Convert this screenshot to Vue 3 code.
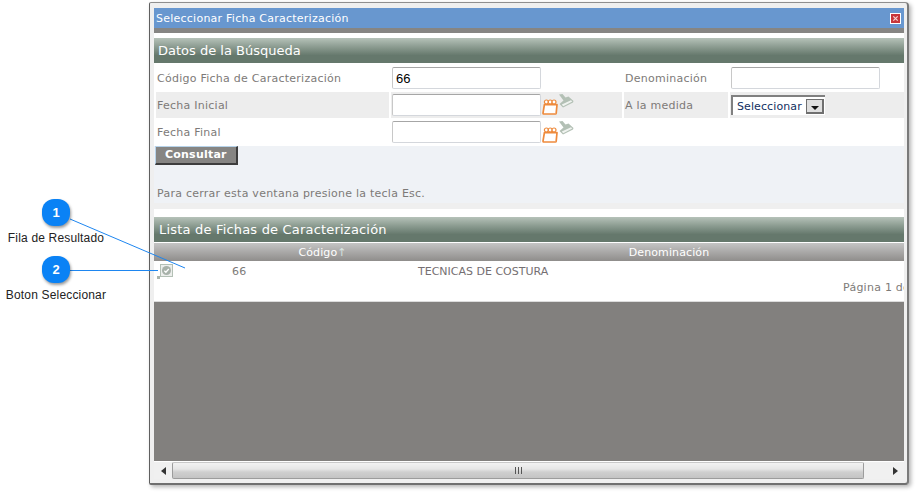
<script setup>
const rows = [
  { label: 'Código Ficha de Caracterización', value: '66', label2: 'Denominación', kind: 'text' },
  { label: 'Fecha Inicial', value: '', label2: 'A la medida', kind: 'select', date: true, alt: true },
  { label: 'Fecha Final', value: '', label2: '', kind: '', date: true }
]
</script>

<template>
  <div class="page">
    <section class="window">
      <div class="viewport">
        <header class="titlebar">
          <span>Seleccionar Ficha Caracterización</span>
          <button class="close" aria-label="Cerrar">
            <svg width="8" height="8" viewBox="0 0 8 8"><path d="M1.5 1.5l5 5M6.5 1.5l-5 5" stroke="#f4d4d4" stroke-width="1.4" /></svg>
          </button>
        </header>
        <div class="titlerule"></div>

        <div class="content">
          <h2 class="band first">Datos de la Búsqueda</h2>
          <div class="form">
            <div v-for="r in rows" :key="r.label" class="row" :class="{ alt: r.alt }">
              <div class="cell lab">{{ r.label }}</div>
              <div class="cell ctl">
                <input class="field" :value="r.value" type="text" />
                <template v-if="r.date">
                  <svg class="cal" width="16" height="16" viewBox="0 0 16 16">
                    <g fill="#fff" stroke="#ee8a3c" stroke-width="1.2">
                      <circle cx="4.4" cy="3" r="2" />
                      <circle cx="8.2" cy="3" r="2" />
                      <circle cx="12" cy="3" r="2" />
                    </g>
                    <path d="M2.4 5.6H15L14.2 14.2Q14.1 15 13.3 15H1.9Q1 15 1 14.1Z" fill="#fff" stroke="#ee8a3c" stroke-width="1.7" stroke-linejoin="round" />
                  </svg>
                  <svg class="brush" width="16" height="14" viewBox="0 0 16 14">
                    <path d="M1 0.5L4.5 0 7.5 3.5 10.5 2.5 15.5 7 15 8.5 5 13.5 1.5 10 5.5 6.5Z" fill="#b3c0b5" />
                    <path d="M3.8 10.4L13 6.2 14.3 7.6 5.2 12.2Z" fill="#f0f3f0" />
                  </svg>
                </template>
              </div>
              <div class="cell lab second" :class="{ blank: !r.label2 }">{{ r.label2 }}</div>
              <div class="cell ctl last">
                <input v-if="r.kind === 'text'" class="field" type="text" />
                <div v-else-if="r.kind === 'select'" class="select">
                  <span>Seleccionar</span>
                  <i class="drop"><b></b></i>
                </div>
              </div>
            </div>
          </div>

          <div class="actions">
            <button class="consult">Consultar</button>
            <p class="hint">Para cerrar esta ventana presione la tecla Esc.</p>
          </div>
          <div class="spacer"></div>

          <div class="list">
            <h2 class="band">Lista de Fichas de Caracterización</h2>
            <div class="thead">
              <span>Código<em>↑</em></span>
              <span>Denominación</span>
            </div>
            <div class="tbody">
              <div class="trow">
                <div class="act">
                  <i class="dot"></i>
                  <span class="pick">
                    <svg width="9" height="9" viewBox="0 0 10 10">
                      <circle cx="5" cy="5" r="5" fill="#a7b1a9" />
                      <path d="M2.6 5.2l1.7 1.7 3.2-3.6" fill="none" stroke="#fff" stroke-width="1.4" />
                    </svg>
                  </span>
                </div>
                <div class="code">66</div>
                <div class="den">TECNICAS DE COSTURA</div>
              </div>
              <div class="pager">Página 1 de 1</div>
            </div>
          </div>
          <div class="empty"></div>
        </div>

        <div class="hscroll">
          <button class="sbtn"><i class="arr left"></i></button>
          <div class="thumb"><span class="grip"></span></div>
          <button class="sbtn end"><i class="arr right"></i></button>
        </div>
      </div>
    </section>

    <svg class="leaders" width="921" height="495" viewBox="0 0 921 495">
      <path d="M70 219L185 268" stroke="#1e86f0" stroke-width="1" fill="none" />
      <path d="M70 270.5H158" stroke="#1e86f0" stroke-width="1" fill="none" />
    </svg>
    <div class="callout c1"><span class="badge">1</span><span class="cap">Fila de Resultado</span></div>
    <div class="callout c2"><span class="badge">2</span><span class="cap">Boton Seleccionar</span></div>
  </div>
</template>

<style scoped>
.page {
  position: relative;
  width: 921px;
  height: 495px;
  padding: 2px 0 0 149px;
  box-sizing: border-box;
  background: #fff;
  overflow: hidden;
  font-family: "DejaVu Sans", Verdana, sans-serif;
  font-size: 11px;
  color: #7d7a78;
}
.window {
  width: 760px;
  height: 483px;
  box-sizing: border-box;
  padding: 5px 4px 6px 4px;
  background: #efefef;
  border: 1px solid #777;
  border-width: 1px 2px 2px 1px;
  border-color: #8f8f8f #7a7a7a #6f6f6f #5f5f5f;
  border-radius: 2px 4px 4px 2px;
  box-shadow: 2px 2px 4px rgba(0, 0, 0, 0.3);
}
.viewport {
  width: 750px;
  height: 471px;
  display: flex;
  flex-direction: column;
  overflow: hidden;
}
.titlebar {
  flex: none;
  height: 20px;
  display: flex;
  align-items: center;
  justify-content: space-between;
  padding: 0 3px 0 2px;
  background: #6897cf;
  color: #fff;
  font-size: 11px;
  letter-spacing: 0.24px;
}
.close {
  width: 11px;
  height: 11px;
  padding: 0;
  box-sizing: border-box;
  display: flex;
  align-items: center;
  justify-content: center;
  background: #c8363a;
  border: 1px solid #fff;
}
.close svg { display: block; width: 7px; height: 7px; }
.titlerule {
  flex: none;
  height: 5px;
  background: #868583;
}
.content {
  flex: 1;
  min-height: 0;
  display: flex;
  flex-direction: column;
  background: #fff;
  padding-top: 5px;
}
.band {
  flex: none;
  margin: 0;
  height: 25px;
  padding-left: 4px;
  display: flex;
  align-items: center;
  color: #fff;
  font-size: 13px;
  font-weight: normal;
  letter-spacing: 0.19px;
  background: linear-gradient(#b6c2b9 0, #8c9c91 35%, #65786c 70%, #65786c 100%);
}
.band.first { letter-spacing: 0; }
.form { flex: none; padding-top: 1px; }
.row {
  display: grid;
  grid-template-columns: 233px 231px 104px 174px;
  column-gap: 2px;
  padding-left: 2px;
  height: 28px;
}
.row.alt { height: 26px; }
.cell {
  display: flex;
  align-items: center;
  min-width: 0;
}
.lab { padding-left: 1px; white-space: nowrap; letter-spacing: 0.25px; }
.second { padding-left: 1px; }
.alt .cell { background: #ededed; }
.ctl { padding-left: 1px; }
.field {
  width: 149px;
  height: 22px;
  box-sizing: border-box;
  padding: 0 3px;
  margin: 0;
  border: 1px solid #d4d7dc;
  border-top-color: #a6a6a6;
  border-left-color: #c8c8c8;
  border-radius: 2px;
  background: #fff;
  font-family: "Liberation Sans", Arial, sans-serif;
  font-size: 13px;
  color: #000;
  outline: none;
}
.cal { margin: 0 0 3px 1px; align-self: flex-end; flex: none; }
.brush { margin-top: 3px; align-self: flex-start; flex: none; }
.alt .brush { margin-top: 2px; }
.select {
  width: 94px;
  height: 20px;
  box-sizing: border-box;
  display: flex;
  align-items: center;
  justify-content: space-between;
  padding-left: 4px;
  padding-right: 1px;
  background: #fff;
  border-top: 2px solid #808080;
  border-left: 2px solid #808080;
  color: #12305f;
  font-size: 11px;
  letter-spacing: 0.1px;
}
.drop {
  width: 18px;
  height: 15px;
  box-sizing: border-box;
  display: flex;
  align-items: center;
  justify-content: center;
  background: #dfdfdf;
  border: 1px solid #6f6f6f;
  border-width: 1px 2px 2px 1px;
}
.drop b {
  display: block;
  margin-top: 4px;
  border: 4px solid transparent;
  border-top: 4px solid #111;
  border-bottom: 0;
}
.actions {
  flex: none;
  height: 57px;
  background: #eff2f6;
  position: relative;
  display: flex;
  flex-direction: column;
  align-items: flex-start;
}
.consult {
  width: 83px;
  height: 19px;
  margin: 0 0 0 1px;
  padding: 0 0 1px 9px;
  text-align: left;
  box-sizing: border-box;
  background: #868583;
  color: #fff;
  border: 0 solid #3d3d3d;
  border-width: 1px 2px 2px 1px;
  border-top-color: #b7d3ea;
  border-left-color: #b7d3ea;
  font-family: "DejaVu Sans", Verdana, sans-serif;
  font-size: 11px;
  font-weight: bold;
  letter-spacing: 0.22px;
}
.hint {
  margin: 22px 0 0 3px;
  letter-spacing: 0.25px;
  line-height: 14px;
}
.spacer {
  flex: none;
  height: 6px;
  background: #efefef;
}
.list {
  flex: none;
  width: 800px;
  padding-top: 8px;
  background: #fff;
}
.list .band { padding-left: 5px; }
.thead {
  margin-top: 1px;
  height: 18px;
  display: grid;
  grid-template-columns: 337px 356px;
  align-items: center;
  justify-items: center;
  color: #fff;
  letter-spacing: 0.1px;
  background: linear-gradient(#c4c4c4, #8f8d8b);
}
.thead em { font-style: normal; color: #d8e4e0; }
.tbody {
  height: 41px;
  border-bottom: 1px solid #dcdcdc;
  box-sizing: border-box;
  background: #fff;
}
.trow {
  height: 21px;
  display: grid;
  grid-template-columns: 78px 186px 1fr;
  align-items: center;
}
.act {
  position: relative;
  height: 21px;
  padding: 3px 0 0 6px;
  box-sizing: border-box;
}
.dot {
  position: absolute;
  left: 3px;
  top: 15px;
  width: 3px;
  height: 3px;
  background: #aab4ac;
}
.pick {
  width: 13px;
  height: 13px;
  box-sizing: border-box;
  border: 1px solid #b3c0b5;
  background: #eceeec;
  display: flex;
  align-items: center;
  justify-content: center;
}
.pick svg { display: block; }
.code { letter-spacing: 0.3px; }
.den { white-space: nowrap; color: #756f72; font-size: 11px; }
.pager {
  width: 800px;
  padding-left: 689px;
  box-sizing: border-box;
  white-space: nowrap;
  line-height: 12px;
  letter-spacing: 0.25px;
}
.empty {
  flex: 1;
  background: #82807e;
  min-height: 0;
}
.hscroll {
  flex: none;
  height: 17px;
  display: flex;
  background: #f0f0f0;
  border-top: 1px solid #fff;
}
.sbtn {
  flex: none;
  width: 18px;
  padding: 0;
  border: 0;
  background: transparent;
  display: flex;
  align-items: center;
  justify-content: center;
}
.sbtn.end { width: 40px; padding-left: 22px; box-sizing: border-box; }
.thumb {
  flex: 1;
  display: flex;
  align-items: center;
  justify-content: center;
  box-sizing: border-box;
  border: 1px solid #9c9c9c;
  border-top-color: #c8c8c8;
  border-radius: 2px;
  background: linear-gradient(#f2f2f2 0, #e6e6e6 40%, #cfcfcf 60%, #c4c4c4 100%);
}
.grip {
  width: 7px;
  height: 7px;
  background: repeating-linear-gradient(90deg, #555 0 1px, transparent 1px 3px);
}
.arr {
  display: block;
  width: 0;
  height: 0;
  border: 4px solid transparent;
}
.arr.left { border-right: 5px solid #333; border-left: 0; }
.arr.right { border-left: 5px solid #333; border-right: 0; }
.leaders {
  position: absolute;
  left: 0;
  top: 0;
  pointer-events: none;
}
.callout {
  position: absolute;
  display: flex;
  flex-direction: column;
  align-items: center;
  font-family: "Liberation Sans", Arial, sans-serif;
}
.c1 { left: 0; top: 199px; width: 112px; row-gap: 5px; }
.c2 { left: 0; top: 256px; width: 112px; row-gap: 5px; }
.badge {
  width: 28px;
  height: 27px;
  border-radius: 12px;
  background: #0a82f5;
  color: #fff;
  font-weight: bold;
  font-size: 13px;
  display: flex;
  align-items: center;
  justify-content: center;
  box-shadow: 1px 2px 3px rgba(0, 0, 0, 0.4);
}
.cap {
  font-size: 12px;
  line-height: 14px;
  color: #222;
  white-space: nowrap;
  letter-spacing: 0.17px;
}
</style>
